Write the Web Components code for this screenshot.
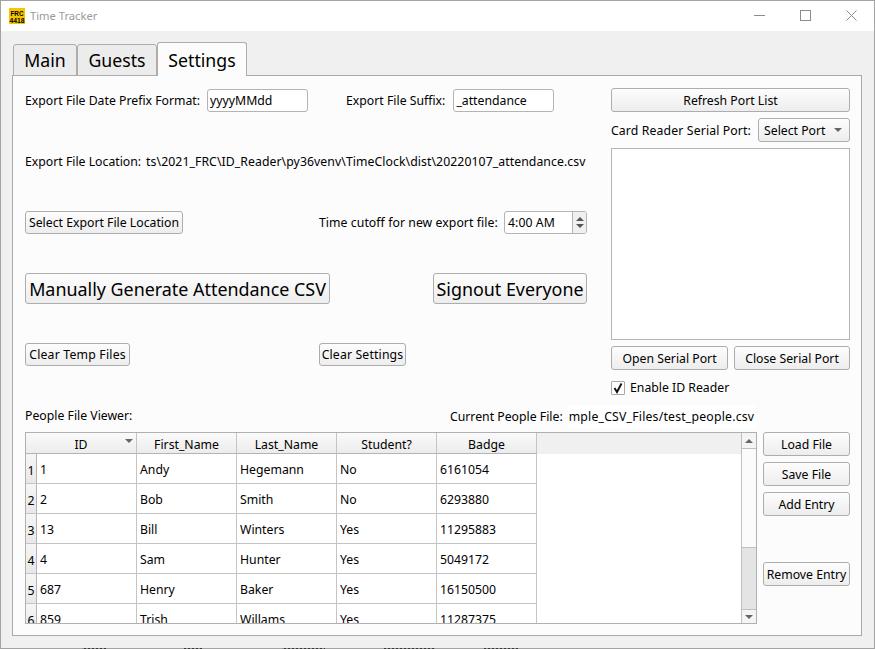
<!DOCTYPE html>
<html><head><meta charset="utf-8">
<style>
html,body{margin:0;padding:0;background:#fff;height:649px;overflow:hidden;}
</style></head><body>
<tt-window>
  <tt-tabs slot="tabs" labels="Main,Guests,Settings" active="2"></tt-tabs>
  <settings-page></settings-page>
</tt-window>
<script>
const FONT = `"Noto Sans","Open Sans",sans-serif`;

// Push button, plain or with the big label
class QButton extends HTMLElement {
  constructor() {
    super();
    this.attachShadow({ mode: 'open' }).innerHTML = `
      <style>
        :host { display:flex; align-items:center; justify-content:center; box-sizing:border-box; height:24px;
          border:1px solid #adadad; border-radius:3px; background:linear-gradient(#fdfdfd,#ededed);
          white-space:nowrap; color:#000; }
        :host([big]) { height:31px; font-size:17.9px; }
      </style><slot></slot>`;
  }
}
customElements.define('q-button', QButton);

// Single line edit
class QInput extends HTMLElement {
  constructor() {
    super();
    this.attachShadow({ mode: 'open' }).innerHTML = `
      <style>
        :host { display:flex; align-items:center; box-sizing:border-box; height:23px; padding-left:2px;
          border:1px solid #b4b4b4; border-radius:3px; background:#fff; white-space:nowrap; }
      </style><slot></slot>`;
  }
}
customElements.define('q-input', QInput);

// Time edit with up and down arrows
class QSpin extends HTMLElement {
  constructor() {
    super();
    this.attachShadow({ mode: 'open' }).innerHTML = `
      <style>
        :host { display:flex; box-sizing:border-box; height:23px;
          border:1px solid #b4b4b4; border-radius:3px; background:#fff; overflow:hidden; }
        .val { flex:1; display:flex; align-items:center; padding-left:3px; }
        .arrows { width:13px; border-left:1px solid #b4b4b4; background:#f0f0f0; display:flex; flex-direction:column;
          align-items:center; justify-content:center; gap:3px; }
        .up, .down { width:0; height:0; border:4px solid transparent; border-top-width:0; border-bottom:4px solid #555; }
        .down { border-bottom-width:0; border-top:4px solid #555; }
      </style>
      <div class="val"><slot></slot></div>
      <div class="arrows"><div class="up"></div><div class="down"></div></div>`;
  }
}
customElements.define('q-spin', QSpin);

// Drop down box
class QCombo extends HTMLElement {
  constructor() {
    super();
    this.attachShadow({ mode: 'open' }).innerHTML = `
      <style>
        :host { display:flex; align-items:center; justify-content:space-between; box-sizing:border-box; height:24px;
          padding:0 7px 0 5px; border:1px solid #adadad; border-radius:3px; background:linear-gradient(#fdfdfd,#ededed);
          white-space:nowrap; }
        .arrow { width:0; height:0; border:4px solid transparent; border-bottom-width:0; border-top:4px solid #666; }
      </style><slot></slot><div class="arrow"></div>`;
  }
}
customElements.define('q-combo', QCombo);

class QCheck extends HTMLElement {
  constructor() {
    super();
    this.attachShadow({ mode: 'open' }).innerHTML = `
      <style>
        :host { display:flex; align-items:center; gap:5px; white-space:nowrap; }
        .box { box-sizing:border-box; width:14px; height:14px; border:1px solid #a8a8a8; border-radius:1px; background:#fff; display:flex; }
      </style>
      <div class="box"><svg width="12" height="12" viewBox="0 0 12 12"><path d="M2.5 6 L5 10 L9.5 1.5" fill="none" stroke="#111" stroke-width="1.9"/></svg></div>
      <slot></slot>`;
  }
}
customElements.define('q-check', QCheck);

// Data table with row numbers, sort arrow on the first column and a scroll bar
class QTable extends HTMLElement {
  set data(d) {
    this._data = d;
    this.render();
  }

  render() {
    const { head, rows } = this._data;
    const heads = head.map((h, i) =>
      `<div class="hd ${i === 0 ? 'first' : ''}">${h}${i === 0 ? '<i class="sort"></i>' : ''}</div>`).join('');
    const body = rows.map((r, i) => `
      <div class="row"><div class="num">${i + 1}</div>${r.map(c => `<div class="cell">${c}</div>`).join('')}</div>`).join('');
    this.attachShadow({ mode: 'open' }).innerHTML = `
      <style>
        :host { display:flex; box-sizing:border-box; height:192px; border:1px solid #b0b0b0; background:#fff; overflow:hidden; }
        .view { flex:1; min-width:0; overflow:hidden; }
        .head { display:flex; height:21px; box-sizing:border-box; background:#f0f0f0; }
        .hd { box-sizing:border-box; width:100px; height:21px; padding-top:2px; display:flex; align-items:center; justify-content:center;
          position:relative; background:linear-gradient(#fafafa,#ececec);
          border-right:1px solid #c4c4c4; border-bottom:1px solid #b4b4b4; }
        .hd.first { width:111px; }
        .sort { position:absolute; right:3px; top:6px; width:0; height:0; border:4px solid transparent;
          border-bottom-width:0; border-top:4px solid #666; }
        .row { display:flex; height:30px; width:511px; box-sizing:border-box; }
        .num { box-sizing:border-box; width:11px; padding-top:3px; display:flex; align-items:center; justify-content:center;
          background:linear-gradient(#f6f6f6,#e8e8e8); border-right:1px solid #b4b4b4; border-bottom:1px solid #c4c4c4; }
        .cell { box-sizing:border-box; width:100px; padding:2px 3px 0; display:flex; align-items:center;
          border-right:1px solid #c4c4c4; border-bottom:1px solid #c4c4c4; white-space:nowrap; }
        .bar { width:15px; box-sizing:border-box; border-left:1px solid #c0c0c0; display:flex; flex-direction:column; background:#e4e4e4; }
        .btn { height:16px; background:#f4f4f4; display:flex; align-items:center; justify-content:center; flex:none; box-sizing:border-box; }
        .btn.top { border-bottom:1px solid #c0c0c0; }
        .btn.bot { height:14px; border-top:1px solid #c0c0c0; }
        .a-up, .a-dn { width:0; height:0; border:4px solid transparent; }
        .a-up { border-top-width:0; border-bottom:4px solid #666; }
        .a-dn { border-bottom-width:0; border-top:4px solid #666; }
        .thumb { height:99px; flex:none; background:#fbfbfb; border-bottom:1px solid #c0c0c0; box-sizing:border-box; }
        .groove { flex:1; }
      </style>
      <div class="view"><div class="head">${heads}</div>${body}</div>
      <div class="bar">
        <div class="btn top"><div class="a-up"></div></div>
        <div class="thumb"></div><div class="groove"></div>
        <div class="btn bot"><div class="a-dn"></div></div>
      </div>`;
  }
}
customElements.define('q-table', QTable);

class TtTabs extends HTMLElement {
  connectedCallback() {
    const active = Number(this.getAttribute('active'));
    const widths = [64, 80, 90];
    const tabs = this.getAttribute('labels').split(',').map((l, i) =>
      `<div class="tab ${i === active ? 'on' : ''}" style="width:${widths[i]}px">${l}</div>`).join('');
    this.attachShadow({ mode: 'open' }).innerHTML = `
      <style>
        :host { display:flex; align-items:flex-end; height:34px; padding-left:1px; font-size:17.7px; position:relative; z-index:1; margin-bottom:-1px; }
        .tab { box-sizing:border-box; height:32px; display:flex; align-items:center; justify-content:center; background:#ececec;
          border:1px solid #adadad; border-radius:3px 3px 0 0; }
        .tab.on { height:34px; background:#fcfcfc; border-bottom:0; }
      </style>${tabs}`;
  }
}
customElements.define('tt-tabs', TtTabs);

class TtWindow extends HTMLElement {
  constructor() {
    super();
    this.attachShadow({ mode: 'open' }).innerHTML = `
      <style>
        :host { display:flex; flex-direction:column; box-sizing:border-box; height:649px; border:1px solid #a3a3a3;
          background:#f0f0f0; font:12.25px ${FONT}; color:#000; position:relative; }
        .title { height:30px; flex:none; background:#fff; display:flex; align-items:center; padding-bottom:1px; box-sizing:border-box; }
        .logo { margin:0 5px 0 8px; }
        .name { color:#9a9a9a; font-size:11.2px; flex:1; }
        .ctl { width:46px; display:flex; justify-content:center; }
        .ctl.min { width:45px; }
        .content { flex:1; min-height:0; padding:11px 12px 12px 11px; display:flex; flex-direction:column; }
        .panel { flex:1; min-height:0; border:1px solid #a9a9a9; background:#fcfcfc; box-sizing:border-box; }
        /* what shows of the window behind, one pixel below the frame */
        .bleed { position:absolute; left:-1px; right:-1px; bottom:-1px; height:1px;
          background:repeating-linear-gradient(90deg, #3a3a3a 0 2px, #8f8f8f 2px 4px);
          -webkit-mask-image:linear-gradient(90deg, transparent 82px, #000 82px, #000 106px, transparent 106px,
            transparent 184px, #000 184px, #000 202px, transparent 202px,
            transparent 282px, #000 282px, #000 325px, transparent 325px,
            transparent 384px, #000 384px, #000 435px, transparent 435px,
            transparent 484px, #000 484px, #000 518px, transparent 518px); }
      </style>
      <div class="title">
        <svg class="logo" width="16" height="16" viewBox="0 0 16 16">
          <rect width="16" height="16" fill="#f7c600"/>
          <text x="8" y="7.5" text-anchor="middle" font-family="Liberation Sans" font-weight="700" font-size="8" textLength="13" lengthAdjust="spacingAndGlyphs">FRC</text>
          <text x="8" y="15.2" text-anchor="middle" font-family="Liberation Sans" font-weight="700" font-size="8" textLength="15" lengthAdjust="spacingAndGlyphs">4418</text>
        </svg>
        <div class="name">Time Tracker</div>
        <div class="ctl min"><svg width="11" height="11"><path d="M0 5.5H11" stroke="#8c8c8c"/></svg></div>
        <div class="ctl"><svg width="11" height="11"><rect x=".5" y=".5" width="10" height="10" fill="none" stroke="#8c8c8c"/></svg></div>
        <div class="ctl"><svg width="11" height="11"><path d="M.5 .5L10.5 10.5M10.5 .5L.5 10.5" stroke="#8c8c8c"/></svg></div>
      </div>
      <div class="content">
        <slot name="tabs"></slot>
        <div class="panel"><slot></slot></div>
      </div>
      <div class="bleed"></div>`;
  }
}
customElements.define('tt-window', TtWindow);

class SettingsPage extends HTMLElement {
  constructor() {
    super();
    this.attachShadow({ mode: 'open' }).innerHTML = `
      <style>
        :host { display:flex; flex-direction:column; box-sizing:border-box; height:100%; padding:12px 11px 0 12px; white-space:nowrap; }
        .top { display:flex; gap:24px; height:311px; flex:none; }
        .left { width:562px; flex:none; padding-top:1px; display:flex; flex-direction:column; }
        .left q-button:not([big]) { height:23px; }
        .right { width:239px; flex:none; display:flex; flex-direction:column; gap:6px; }
        .row { display:flex; align-items:center; height:23px; flex:none; }
        .grid { display:grid; grid-template-columns:294px 1fr; align-items:center; flex:none; }
        .loc { margin-top:41px; height:17px; }
        .path { margin-left:5px; letter-spacing:.07px; }
        .cut { display:flex; align-items:center; justify-content:space-between; letter-spacing:.06px; }
        .combo-row { display:flex; align-items:center; justify-content:space-between; }
        .wide { letter-spacing:.13px; }
        .pair { display:flex; justify-content:space-between; }
        .list { height:192px; flex:none; box-sizing:border-box; border:1px solid #b4b4b4; background:#fff; }
        .people { height:22px; flex:none; margin-top:6px; display:flex; align-items:center; position:relative; }
        .viewer { margin-top:-2px; }
        .cur { position:absolute; left:425px; display:flex; align-items:center; }
        .curfile { margin-left:5px; background:#fff; padding:3px 1px; letter-spacing:.2px; }
        .bottom { display:flex; gap:6px; margin-top:5px; }
        .side { width:87px; flex:none; display:flex; flex-direction:column; gap:6px; }
        q-table { width:732px; flex:none; }
      </style>
      <div class="top">
        <div class="left">
          <div class="row">Export File Date Prefix Format:
            <q-input style="width:101px;margin-left:7px">yyyyMMdd</q-input>
            <span style="margin-left:38px">Export File Suffix:</span>
            <q-input style="width:101px;margin-left:8px">_attendance</q-input>
          </div>
          <div class="row loc">Export File Location:
            <div class="path">ts\\2021_FRC\\ID_Reader\\py36venv\\TimeClock\\dist\\20220107_attendance.csv</div>
          </div>
          <div class="grid" style="margin-top:41px">
            <q-button style="width:158px">Select Export File Location</q-button>
            <div class="cut">Time cutoff for new export file:<q-spin style="width:83px">4:00 AM</q-spin></div>
          </div>
          <div class="pair" style="margin-top:39px">
            <q-button big style="width:305px">Manually Generate Attendance CSV</q-button>
            <q-button big style="width:154px">Signout Everyone</q-button>
          </div>
          <div class="grid" style="margin-top:39px">
            <q-button style="width:105px;letter-spacing:.2px">Clear Temp Files</q-button>
            <q-button style="width:87px;letter-spacing:.15px">Clear Settings</q-button>
          </div>
        </div>
        <div class="right">
          <q-button>Refresh Port List</q-button>
          <div class="combo-row"><span class="wide">Card Reader Serial Port:</span><q-combo style="width:92px">Select Port</q-combo></div>
          <div class="list"></div>
          <div class="pair"><q-button style="width:117px">Open Serial Port</q-button><q-button style="width:116px">Close Serial Port</q-button></div>
          <q-check style="margin-top:3px">Enable ID Reader</q-check>
        </div>
      </div>
      <div class="people"><span class="viewer">People File Viewer:</span>
        <div class="cur">Current People File:<span class="curfile">mple_CSV_Files/test_people.csv</span></div>
      </div>
      <div class="bottom">
        <q-table id="t"></q-table>
        <div class="side">
          <q-button>Load File</q-button>
          <q-button>Save File</q-button>
          <q-button>Add Entry</q-button>
          <q-button style="margin-top:40px">Remove Entry</q-button>
        </div>
      </div>`;
    this.shadowRoot.getElementById('t').data = {
      head: ['ID', 'First_Name', 'Last_Name', 'Student?', 'Badge'],
      rows: [
        ['1', 'Andy', 'Hegemann', 'No', '6161054'],
        ['2', 'Bob', 'Smith', 'No', '6293880'],
        ['13', 'Bill', 'Winters', 'Yes', '11295883'],
        ['4', 'Sam', 'Hunter', 'Yes', '5049172'],
        ['687', 'Henry', 'Baker', 'Yes', '16150500'],
        ['859', 'Trish', 'Willams', 'Yes', '11287375'],
      ],
    };
  }
}
customElements.define('settings-page', SettingsPage);
</script>
</body></html>
